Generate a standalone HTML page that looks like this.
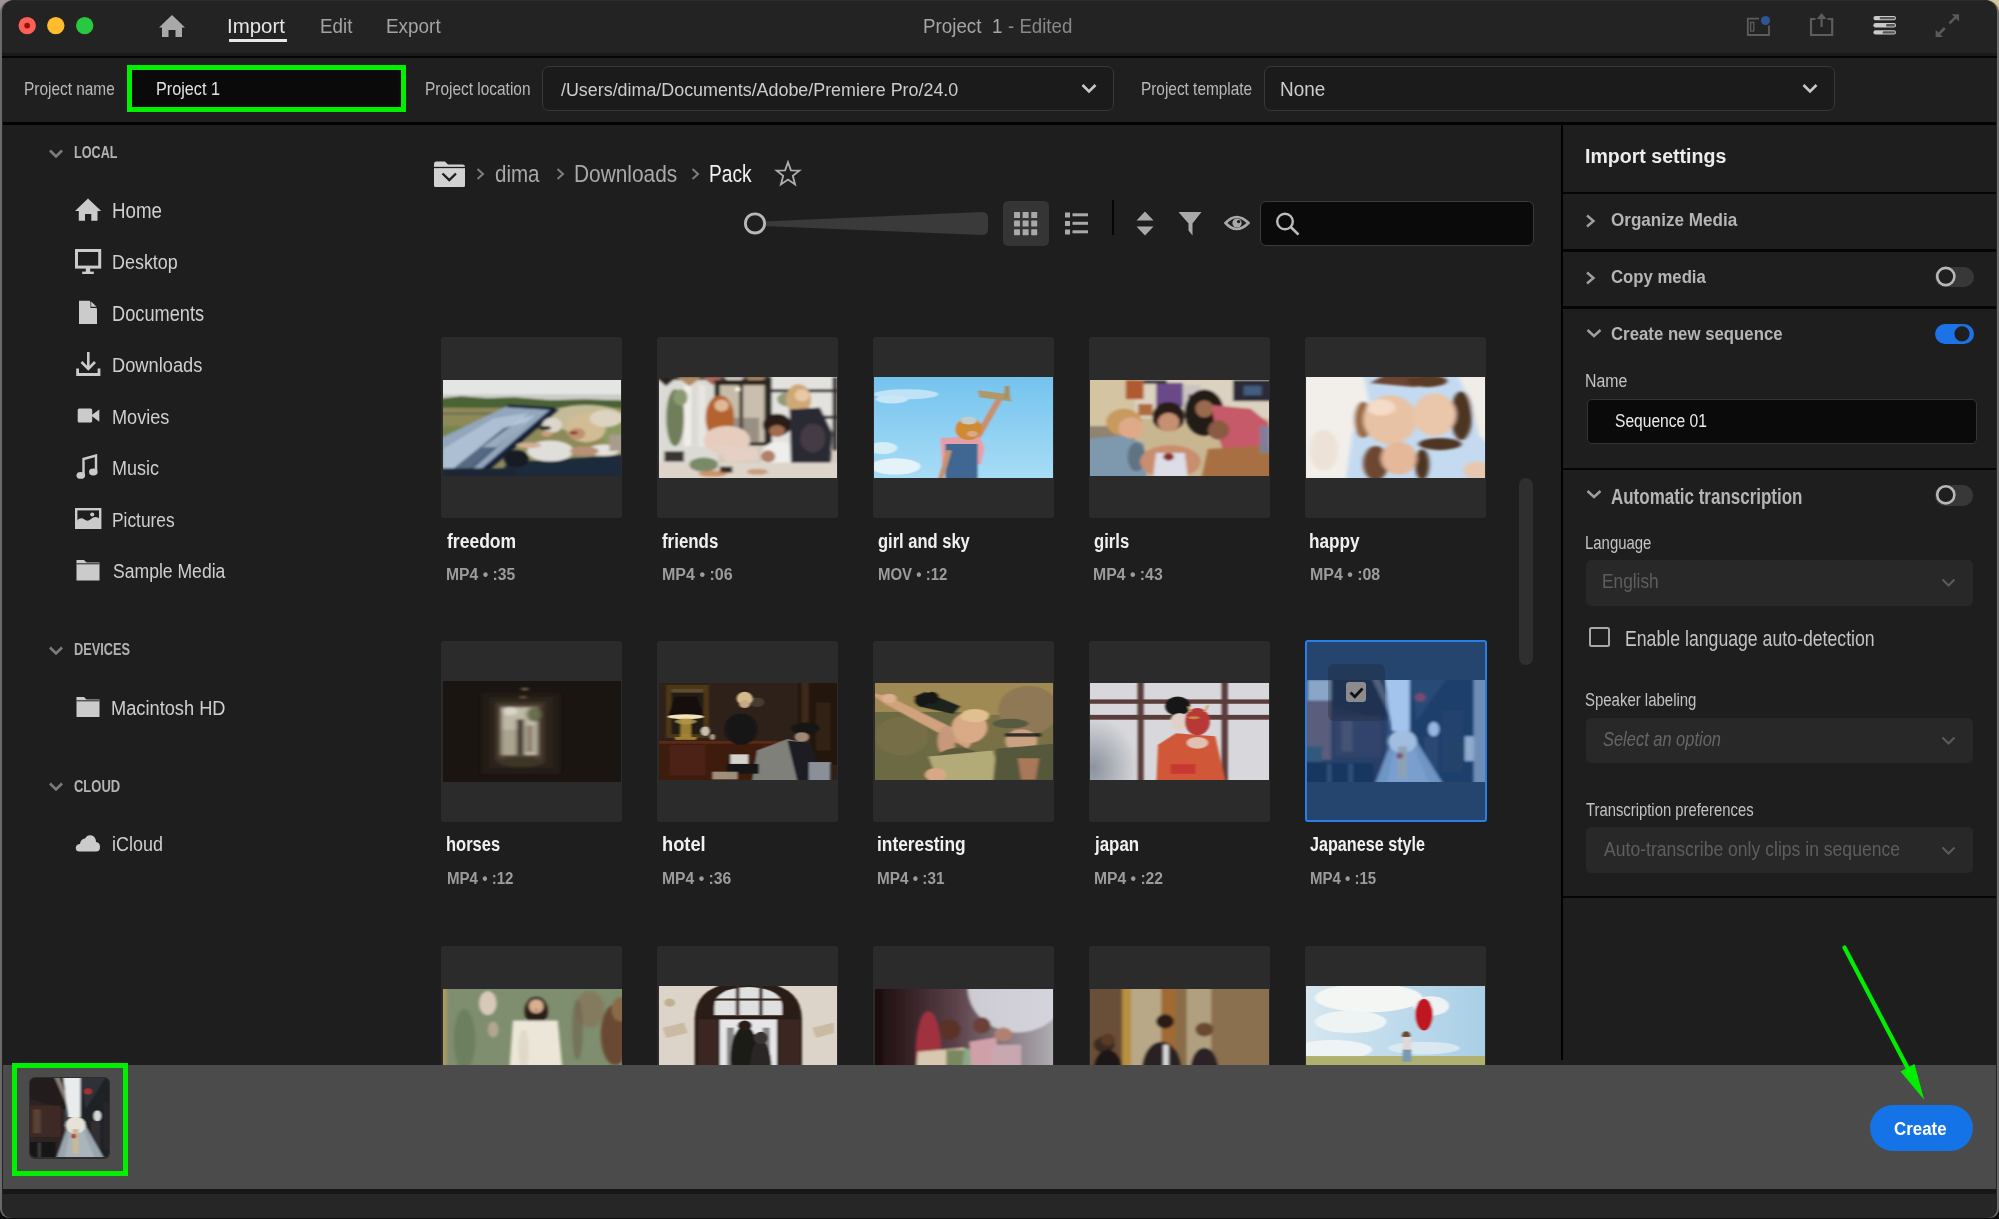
<!DOCTYPE html><html><head><meta charset="utf-8"><style>
html,body{margin:0;padding:0;width:1999px;height:1219px;overflow:hidden;background:#1e1e1e}
body{position:relative;font-family:"Liberation Sans",sans-serif}
body *{box-sizing:border-box}
body>div,body>svg{position:absolute}
.t{white-space:pre;transform-origin:0 0}
</style></head><body>
<div style="left:0px;top:0px;width:20px;height:20px;background:#9e9494;"></div>
<div style="left:1979px;top:0px;width:20px;height:20px;background:#d2c79c;"></div>
<div style="left:0px;top:1199px;width:20px;height:20px;background:#0c0c0c;"></div>
<div style="left:1979px;top:1199px;width:20px;height:20px;background:#0c0c0c;"></div>
<div style="left:0px;top:0px;width:1999px;height:1218px;background:#6a6a6a;border-radius:13px 13px 9px 9px"></div>
<div style="left:2px;top:0px;width:1995px;height:1217px;background:#232323;border-radius:12px 12px 8px 8px"></div>
<div style="left:14px;top:0px;width:1971px;height:1px;background:#2a2a2a;"></div>
<div style="left:0px;top:1218px;width:1999px;height:1px;background:#0c0c0c;"></div>
<div style="left:2px;top:53px;width:1995px;height:3px;background:#1a1a1a;"></div>
<div style="left:2px;top:56px;width:1995px;height:2px;background:#050505;"></div>
<div style="left:3px;top:58px;width:1993px;height:64px;background:#1f1f1f;"></div>
<div style="left:3px;top:122px;width:1993px;height:3px;background:#030303;"></div>
<div style="left:3px;top:125px;width:1993px;height:940px;background:#1e1e1e;"></div>
<div style="left:1561px;top:125px;width:2px;height:935px;background:#000;"></div>
<div style="left:1563px;top:125px;width:433px;height:935px;background:#1e1e1e;"></div>
<svg style="left:0;top:0" width="120" height="50"><circle cx="27.2" cy="25.6" r="8.7" fill="#fe5f57"/><circle cx="27.2" cy="25.6" r="2.9" fill="#991100"/><circle cx="55.8" cy="25.6" r="8.7" fill="#febc2e"/><circle cx="84.7" cy="25.6" r="8.7" fill="#28c840"/></svg>
<svg style="left:159px;top:15px;" width="26" height="22" viewBox="0 0 26 22"><path d="M13 0 L26 12.5 L23 12.5 L23 22 L16.5 22 L16.5 15 L9.5 15 L9.5 22 L3 22 L3 12.5 L0 12.5 Z" fill="#a9a9a9"/></svg>
<div class="t" style="left:227.46px;top:16.30px;font-size:20.43px;line-height:20px;font-weight:400;font-style:normal;color:#e6e6e6;transform:scaleX(0.9997)">Import</div>
<div style="left:229px;top:39px;width:58px;height:3px;background:#e8e8e8;"></div>
<div class="t" style="left:320.20px;top:17.30px;font-size:19.32px;line-height:19px;font-weight:400;font-style:normal;color:#a3a3a3;transform:scaleX(0.9723)">Edit</div>
<div class="t" style="left:386.29px;top:16.30px;font-size:20.43px;line-height:20px;font-weight:400;font-style:normal;color:#a3a3a3;transform:scaleX(0.9257)">Export</div>
<div class="t" style="left:922.90px;top:16.30px;font-size:20.14px;line-height:20px;font-weight:400;font-style:normal;color:#a6a6a6;transform:scaleX(0.9331)">Project  1</div>
<div class="t" style="left:1008.25px;top:16.30px;font-size:20.14px;line-height:20px;font-weight:400;font-style:normal;color:#898989;transform:scaleX(0.9265)">- Edited</div>
<svg style="left:1740px;top:5px;" width="230" height="40" viewBox="0 0 230 40"><path d="M7.8 13.6 H19 M7.8 12.8 V30 H29 V20.5" stroke="#5c5c5c" stroke-width="1.8" fill="none"/><rect x="10.6" y="17.4" width="3.2" height="8.6" fill="none" stroke="#5c5c5c" stroke-width="1.3"/><circle cx="25.5" cy="15.5" r="4.6" fill="#2c5591"/><path d="M75.5 14 H71 V30 H92.2 V14 H87.5" stroke="#5c5c5c" stroke-width="2.2" fill="none"/><path d="M81.6 22 V10" stroke="#5c5c5c" stroke-width="2.2"/><path d="M76.7 14 L81.6 8 L86.5 14 Z" fill="#5c5c5c"/><rect x="133.4" y="10.9" width="22.6" height="4.4" rx="2.2" fill="#c9c9c9"/><rect x="139.6" y="11.9" width="15.4" height="2.4" rx="1.2" fill="#555"/><rect x="133.4" y="18.1" width="22.6" height="4.4" rx="2.2" fill="#c9c9c9"/><rect x="146" y="19.1" width="9" height="2.4" rx="1.2" fill="#555"/><rect x="133.4" y="25.3" width="22.6" height="4.2" rx="2.1" fill="#c9c9c9"/><rect x="142.6" y="26.2" width="12.4" height="2.4" rx="1.2" fill="#555"/><path d="M209.4 18.4 L216.5 11.3" stroke="#5a5a5a" stroke-width="2.5"/><path d="M211.7 9.2 H219 V16.5 Z" fill="#5a5a5a"/><path d="M204.8 23 L198.5 29.3" stroke="#5a5a5a" stroke-width="2.5"/><path d="M195.6 24.7 V32 H202.9 Z" fill="#5a5a5a"/></svg>
<div class="t" style="left:24.27px;top:80.20px;font-size:17.67px;line-height:18px;font-weight:400;font-style:normal;color:#b8b8b8;transform:scaleX(0.8720)">Project name</div>
<div style="left:127px;top:65px;width:279px;height:47px;background:#00f000;"></div>
<div style="left:132px;top:70px;width:269px;height:37px;background:#0a0a0a;"></div>
<div class="t" style="left:156.30px;top:79.70px;font-size:18.36px;line-height:18px;font-weight:400;font-style:normal;color:#e2e2e2;transform:scaleX(0.8827)">Project 1</div>
<div class="t" style="left:424.56px;top:80.30px;font-size:17.53px;line-height:18px;font-weight:400;font-style:normal;color:#b8b8b8;transform:scaleX(0.8809)">Project location</div>
<div style="left:542px;top:66px;width:572px;height:45px;background:#1b1b1b;border:1.5px solid #383838;border-radius:7px"></div>
<div class="t" style="left:560.80px;top:80.00px;font-size:18.90px;line-height:19px;font-weight:400;font-style:normal;color:#cdcdcd;transform:scaleX(0.9459)">/Users/dima/Documents/Adobe/Premiere Pro/24.0</div>
<svg style="left:1080px;top:81px;" width="18" height="14" viewBox="0 0 18 14"><path d="M2.5 4 L9 10.5 L15.5 4" stroke="#c8c8c8" stroke-width="2.6" fill="none"/></svg>
<div class="t" style="left:1140.77px;top:80.30px;font-size:17.53px;line-height:18px;font-weight:400;font-style:normal;color:#b8b8b8;transform:scaleX(0.8776)">Project template</div>
<div style="left:1264px;top:66px;width:571px;height:45px;background:#1b1b1b;border:1.5px solid #383838;border-radius:7px"></div>
<div class="t" style="left:1280.49px;top:79.00px;font-size:20.00px;line-height:20px;font-weight:400;font-style:normal;color:#cdcdcd;transform:scaleX(0.9453)">None</div>
<svg style="left:1801px;top:81px;" width="18" height="14" viewBox="0 0 18 14"><path d="M2.5 4 L9 10.5 L15.5 4" stroke="#c8c8c8" stroke-width="2.6" fill="none"/></svg>
<svg style="left:48px;top:147.5px;" width="16" height="12" viewBox="0 0 16 12"><path d="M2 2.5 L8 8.5 L14 2.5" stroke="#7c7c7c" stroke-width="2.6" fill="none"/></svg>
<div class="t" style="left:73.74px;top:144.70px;font-size:15.71px;line-height:16px;font-weight:700;font-style:normal;color:#b3b3b3;transform:scaleX(0.8042)">LOCAL</div>
<div class="t" style="left:111.70px;top:199.50px;font-size:21.16px;line-height:21px;font-weight:400;font-style:normal;color:#cfcfcf;transform:scaleX(0.8854)">Home</div>
<div class="t" style="left:111.77px;top:252.30px;font-size:20.00px;line-height:20px;font-weight:400;font-style:normal;color:#cfcfcf;transform:scaleX(0.8966)">Desktop</div>
<div class="t" style="left:111.74px;top:302.60px;font-size:21.16px;line-height:21px;font-weight:400;font-style:normal;color:#cfcfcf;transform:scaleX(0.8606)">Documents</div>
<div class="t" style="left:111.74px;top:355.30px;font-size:20.00px;line-height:20px;font-weight:400;font-style:normal;color:#cfcfcf;transform:scaleX(0.9127)">Downloads</div>
<div class="t" style="left:111.75px;top:407.20px;font-size:20.00px;line-height:20px;font-weight:400;font-style:normal;color:#cfcfcf;transform:scaleX(0.9060)">Movies</div>
<div class="t" style="left:111.76px;top:458.40px;font-size:20.00px;line-height:20px;font-weight:400;font-style:normal;color:#cfcfcf;transform:scaleX(0.8999)">Music</div>
<div class="t" style="left:111.81px;top:509.60px;font-size:20.00px;line-height:20px;font-weight:400;font-style:normal;color:#cfcfcf;transform:scaleX(0.8680)">Pictures</div>
<div class="t" style="left:112.50px;top:560.60px;font-size:20.00px;line-height:20px;font-weight:400;font-style:normal;color:#cfcfcf;transform:scaleX(0.8787)">Sample Media</div>
<svg style="left:75px;top:198px;" width="27" height="23" viewBox="0 0 27 23"><path d="M13 0.5 L26.2 13 L22.5 13 L22.5 22.8 L16.3 22.8 L16.3 16 L10 16 L10 22.8 L3.8 22.8 L3.8 13 L0 13 Z" fill="#cbcbcb"/></svg>
<svg style="left:75px;top:249px;" width="27" height="25" viewBox="0 0 27 25"><rect x="1.5" y="1.5" width="23.2" height="16.6" fill="none" stroke="#cbcbcb" stroke-width="3"/><rect x="10.8" y="19" width="4.4" height="4" fill="#cbcbcb"/><rect x="7.2" y="22.6" width="11.6" height="2.4" fill="#cbcbcb"/></svg>
<svg style="left:79px;top:300px;" width="18" height="24" viewBox="0 0 18 24"><path d="M0 0.8 H10.5 L18 8.5 V24 H0 Z" fill="#cbcbcb"/><path d="M11.5 0.8 V8 H18" fill="#1e1e1e"/><path d="M12.2 1.5 L17.5 6.8 H12.2 Z" fill="#cbcbcb"/></svg>
<svg style="left:76px;top:351px;" width="25" height="26" viewBox="0 0 25 26"><path d="M12.3 1 V17" stroke="#cbcbcb" stroke-width="2.6"/><path d="M5.5 11 L12.3 18 L19 11" stroke="#cbcbcb" stroke-width="2.6" fill="none"/><path d="M1.6 17.5 V23.5 H23 V17.5" stroke="#cbcbcb" stroke-width="2.8" fill="none"/></svg>
<svg style="left:77px;top:408px;" width="24" height="15" viewBox="0 0 24 15"><rect x="0.7" y="0.5" width="14.5" height="14" rx="1.5" fill="#cbcbcb"/><path d="M14 7.5 L22.3 1.5 V13.8 Z" fill="#cbcbcb"/></svg>
<svg style="left:76px;top:454px;" width="22" height="26" viewBox="0 0 22 26"><path d="M7.5 21 V5 L20 1.5 V17" stroke="#cbcbcb" stroke-width="2.4" fill="none"/><ellipse cx="4.8" cy="21.4" rx="4.3" ry="3.4" fill="#cbcbcb"/><ellipse cx="17.3" cy="18" rx="4.3" ry="3.4" fill="#cbcbcb"/></svg>
<svg style="left:75px;top:508px;" width="27" height="21" viewBox="0 0 27 21"><rect x="1.2" y="1.2" width="24" height="18.6" fill="none" stroke="#cbcbcb" stroke-width="2.4"/><path d="M1.2 13.5 Q5 8 9.5 11.5 Q12.5 14 16 11 Q20 7 25.2 11 V20 H1.2 Z" fill="#cbcbcb"/><circle cx="17.2" cy="6.5" r="2" fill="#cbcbcb"/></svg>
<svg style="left:76px;top:559px;" width="24" height="22" viewBox="0 0 24 22"><path d="M0.5 1 H8 L10.5 3.5 H23.5 V21.5 H0.5 Z" fill="#cbcbcb"/><path d="M0.5 4.8 H23.5" stroke="#1e1e1e" stroke-width="1"/></svg>
<svg style="left:48px;top:644.5px;" width="16" height="12" viewBox="0 0 16 12"><path d="M2 2.5 L8 8.5 L14 2.5" stroke="#7c7c7c" stroke-width="2.6" fill="none"/></svg>
<div class="t" style="left:73.93px;top:642.40px;font-size:16.00px;line-height:16px;font-weight:700;font-style:normal;color:#b3b3b3;transform:scaleX(0.7978)">DEVICES</div>
<svg style="left:76px;top:696px;" width="24" height="22" viewBox="0 0 24 22"><path d="M0.5 1 H8 L10.5 3.5 H23.5 V21 H0.5 Z" fill="#cbcbcb"/><path d="M0.5 4.8 H23.5" stroke="#1e1e1e" stroke-width="1"/></svg>
<div class="t" style="left:111.24px;top:697.80px;font-size:20.00px;line-height:20px;font-weight:400;font-style:normal;color:#cfcfcf;transform:scaleX(0.9119)">Macintosh HD</div>
<svg style="left:48px;top:780.5px;" width="16" height="12" viewBox="0 0 16 12"><path d="M2 2.5 L8 8.5 L14 2.5" stroke="#7c7c7c" stroke-width="2.6" fill="none"/></svg>
<div class="t" style="left:74.18px;top:778.50px;font-size:16.00px;line-height:16px;font-weight:700;font-style:normal;color:#b3b3b3;transform:scaleX(0.8111)">CLOUD</div>
<svg style="left:75px;top:833px;" width="26" height="19" viewBox="0 0 26 19"><path d="M4.5 18.5 Q0.5 18.5 0.8 14.5 Q1.2 11 5 11 Q5.5 6 10 5.5 Q12.5 1 17 2.5 Q21 4 21 9 Q25 9.5 25 14 Q25 18.5 21 18.5 Z" fill="#cbcbcb"/></svg>
<div class="t" style="left:111.62px;top:834.40px;font-size:20.00px;line-height:20px;font-weight:400;font-style:normal;color:#cfcfcf;transform:scaleX(0.8975)">iCloud</div>
<svg style="left:433px;top:160px;" width="33" height="28" viewBox="0 0 33 28"><path d="M1 4 Q1 1.5 3 1.5 H12 L15 4.5 H30 Q32 4.5 32 7 V25.5 Q32 27 30.5 27 H2.5 Q1 27 1 25.5 Z" fill="#d2d2d2"/><path d="M1 7.5 H32" stroke="#1e1e1e" stroke-width="1.3"/><path d="M9.5 13.5 L16.3 20 L23 13.5" stroke="#1e1e1e" stroke-width="2.4" fill="none"/></svg>
<svg style="left:476px;top:167.5px;" width="9" height="12" viewBox="0 0 9 12"><path d="M1.5 1 L7 6 L1.5 11" stroke="#7e7e7e" stroke-width="2" fill="none"/></svg>
<div class="t" style="left:495.18px;top:161.70px;font-size:23.84px;line-height:24px;font-weight:400;font-style:normal;color:#a9a9a9;transform:scaleX(0.8622)">dima</div>
<svg style="left:555.5px;top:167.5px;" width="9" height="12" viewBox="0 0 9 12"><path d="M1.5 1 L7 6 L1.5 11" stroke="#7e7e7e" stroke-width="2" fill="none"/></svg>
<div class="t" style="left:573.53px;top:161.70px;font-size:23.84px;line-height:24px;font-weight:400;font-style:normal;color:#a9a9a9;transform:scaleX(0.8760)">Downloads</div>
<svg style="left:690.5px;top:167.5px;" width="9" height="12" viewBox="0 0 9 12"><path d="M1.5 1 L7 6 L1.5 11" stroke="#7e7e7e" stroke-width="2" fill="none"/></svg>
<div class="t" style="left:709.47px;top:162.20px;font-size:23.56px;line-height:24px;font-weight:400;font-style:normal;color:#f2f2f2;transform:scaleX(0.8121)">Pack</div>
<svg style="left:774px;top:160px;" width="28" height="27" viewBox="0 0 28 27"><path d="M14 2.2 L16.9 10.4 L25.4 10.6 L18.8 15.9 L21.1 24.4 L14 19.6 L6.9 24.4 L9.2 15.9 L2.6 10.6 L11.1 10.4 Z" fill="none" stroke="#b0b0b0" stroke-width="1.8" stroke-linejoin="miter"/></svg>
<svg style="left:742px;top:210px;" width="250" height="28" viewBox="0 0 250 28"><path d="M21 11.5 L240 2 Q246 2 246 8 V19 Q246 25 240 25 L21 16 Z" fill="#3a3a3a"/><circle cx="13" cy="13.4" r="9.6" fill="#1e1e1e" stroke="#b8b8b8" stroke-width="2.8"/></svg>
<div style="left:1003px;top:201px;width:46px;height:45px;background:#353535;border-radius:5px"></div>
<svg style="left:1013px;top:211px;" width="26" height="26" viewBox="0 0 26 26"><rect x="1.0" y="1.0" width="6" height="6" rx="0.6" fill="#a9a9a9"/><rect x="1.0" y="9.6" width="6" height="6" rx="0.6" fill="#a9a9a9"/><rect x="1.0" y="18.2" width="6" height="6" rx="0.6" fill="#a9a9a9"/><rect x="9.6" y="1.0" width="6" height="6" rx="0.6" fill="#a9a9a9"/><rect x="9.6" y="9.6" width="6" height="6" rx="0.6" fill="#a9a9a9"/><rect x="9.6" y="18.2" width="6" height="6" rx="0.6" fill="#a9a9a9"/><rect x="18.2" y="1.0" width="6" height="6" rx="0.6" fill="#a9a9a9"/><rect x="18.2" y="9.6" width="6" height="6" rx="0.6" fill="#a9a9a9"/><rect x="18.2" y="18.2" width="6" height="6" rx="0.6" fill="#a9a9a9"/></svg>
<svg style="left:1064px;top:211px;" width="25" height="26" viewBox="0 0 25 26"><rect x="1" y="1.5" width="5" height="5" fill="#a9a9a9"/><rect x="1" y="10" width="5" height="5" fill="#a9a9a9"/><rect x="1" y="18.5" width="5" height="5" fill="#a9a9a9"/><rect x="8.5" y="2.3" width="15.5" height="3" fill="#a9a9a9"/><rect x="8.5" y="10.8" width="15.5" height="3" fill="#a9a9a9"/><rect x="8.5" y="19.3" width="15.5" height="3" fill="#a9a9a9"/></svg>
<div style="left:1112px;top:200px;width:2px;height:35px;background:#050505;"></div>
<svg style="left:1135px;top:211px;" width="20" height="25" viewBox="0 0 20 25"><path d="M10 0.5 L18.5 9.5 H1.5 Z M10 24.5 L18.5 15.5 H1.5 Z" fill="#a9a9a9"/></svg>
<svg style="left:1178px;top:211px;" width="24" height="25" viewBox="0 0 24 25"><path d="M0.5 1 H23.5 L14.5 12.5 V24.5 L10.5 19.5 V12.5 Z" fill="#a9a9a9"/></svg>
<svg style="left:1224px;top:213px;" width="26" height="20" viewBox="0 0 26 20"><path d="M1.5 10 Q12.5 -2 24.5 10 Q12.5 22 1.5 10 Z" fill="none" stroke="#a9a9a9" stroke-width="2.6"/><circle cx="13" cy="10" r="4.6" fill="#a9a9a9"/><circle cx="14.6" cy="8.6" r="1.7" fill="#1e1e1e"/></svg>
<div style="left:1260px;top:201px;width:274px;height:45px;background:#0a0a0a;border:1.5px solid #3b3b3b;border-radius:6px"></div>
<svg style="left:1275px;top:211px;" width="27" height="27" viewBox="0 0 27 27"><circle cx="10" cy="10.5" r="7.8" fill="none" stroke="#bdbdbd" stroke-width="2.4"/><path d="M15.8 16 L23.5 23.7" stroke="#bdbdbd" stroke-width="2.6"/></svg>
<div style="left:1519px;top:478px;width:14px;height:187px;background:#2f2f2f;border-radius:7px"></div>
<div class="t" style="left:1585.33px;top:145.20px;font-size:20.82px;line-height:21px;font-weight:700;font-style:normal;color:#ececec;transform:scaleX(0.9401)">Import settings</div>
<div style="left:1563px;top:191.5px;width:433px;height:2.5px;background:#050505;"></div>
<svg style="left:1585px;top:214px;" width="11" height="14" viewBox="0 0 11 14"><path d="M2 1.5 L8.5 7 L2 12.5" stroke="#a0a0a0" stroke-width="2.4" fill="none"/></svg>
<div class="t" style="left:1611.32px;top:211.30px;font-size:18.36px;line-height:18px;font-weight:700;font-style:normal;color:#b5b5b5;transform:scaleX(0.9298)">Organize Media</div>
<div style="left:1563px;top:249px;width:433px;height:2.5px;background:#050505;"></div>
<svg style="left:1585px;top:271px;" width="11" height="14" viewBox="0 0 11 14"><path d="M2 1.5 L8.5 7 L2 12.5" stroke="#a0a0a0" stroke-width="2.4" fill="none"/></svg>
<div class="t" style="left:1611.33px;top:268.20px;font-size:18.08px;line-height:18px;font-weight:700;font-style:normal;color:#b5b5b5;transform:scaleX(0.9253)">Copy media</div>
<div style="left:1935px;top:266.5px;width:38.5px;height:20px;background:#383838;border-radius:10px"></div>
<svg style="left:1935px;top:266px;" width="22" height="22" viewBox="0 0 22 22"><circle cx="10.8" cy="10.5" r="8.6" fill="#1f1f1f" stroke="#b8b8b8" stroke-width="2.6"/></svg>
<div style="left:1563px;top:306px;width:433px;height:2.5px;background:#050505;"></div>
<svg style="left:1586px;top:328px;" width="16" height="11" viewBox="0 0 16 11"><path d="M1.5 2 L8 8 L14.5 2" stroke="#a0a0a0" stroke-width="2.4" fill="none"/></svg>
<div class="t" style="left:1611.33px;top:324.40px;font-size:19.14px;line-height:19px;font-weight:700;font-style:normal;color:#b5b5b5;transform:scaleX(0.8771)">Create new sequence</div>
<div style="left:1935px;top:323.5px;width:38.5px;height:20.5px;background:#1e72e8;border-radius:10.5px"></div>
<svg style="left:1951px;top:323px;" width="22" height="22" viewBox="0 0 22 22"><circle cx="11" cy="10.8" r="8.2" fill="#1f1f1f" stroke="#1e72e8" stroke-width="1.2"/></svg>
<div class="t" style="left:1585.23px;top:372.20px;font-size:17.68px;line-height:18px;font-weight:400;font-style:normal;color:#c3c3c3;transform:scaleX(0.8978)">Name</div>
<div style="left:1586.5px;top:399px;width:390px;height:45px;background:#0a0a0a;border:1.5px solid #343434;border-radius:5px"></div>
<div class="t" style="left:1615.18px;top:410.80px;font-size:18.73px;line-height:19px;font-weight:400;font-style:normal;color:#ececec;transform:scaleX(0.8328)">Sequence 01</div>
<div style="left:1563px;top:467.5px;width:433px;height:2.5px;background:#050505;"></div>
<svg style="left:1586px;top:489px;" width="16" height="11" viewBox="0 0 16 11"><path d="M1.5 2 L8 8 L14.5 2" stroke="#a0a0a0" stroke-width="2.4" fill="none"/></svg>
<div class="t" style="left:1611.36px;top:486.00px;font-size:21.23px;line-height:21px;font-weight:700;font-style:normal;color:#b5b5b5;transform:scaleX(0.7999)">Automatic transcription</div>
<div style="left:1935px;top:485px;width:38px;height:20.5px;background:#383838;border-radius:10px"></div>
<svg style="left:1935px;top:484px;" width="22" height="22" viewBox="0 0 22 22"><circle cx="10.8" cy="10.8" r="8.6" fill="#1f1f1f" stroke="#b8b8b8" stroke-width="2.6"/></svg>
<div class="t" style="left:1584.61px;top:533.00px;font-size:19.28px;line-height:19px;font-weight:400;font-style:normal;color:#c3c3c3;transform:scaleX(0.7747)">Language</div>
<div style="left:1585.8px;top:560px;width:387px;height:46px;background:#282828;border-radius:5px"></div>
<div class="t" style="left:1602.22px;top:570.00px;font-size:20.55px;line-height:21px;font-weight:400;font-style:normal;color:#5e5e5e;transform:scaleX(0.8406)">English</div>
<svg style="left:1941px;top:578px;" width="15" height="10" viewBox="0 0 15 10"><path d="M1.5 1.5 L7.5 7.5 L13.5 1.5" stroke="#5a5a5a" stroke-width="2.2" fill="none"/></svg>
<div style="left:1589px;top:626.5px;width:21px;height:20px;background:transparent;border:2.4px solid #a8a8a8;border-radius:2.5px"></div>
<div class="t" style="left:1625.08px;top:627.50px;font-size:21.23px;line-height:21px;font-weight:400;font-style:normal;color:#c3c3c3;transform:scaleX(0.8331)">Enable language auto-detection</div>
<div class="t" style="left:1585.20px;top:690.90px;font-size:18.22px;line-height:18px;font-weight:400;font-style:normal;color:#c3c3c3;transform:scaleX(0.8218)">Speaker labeling</div>
<div style="left:1585.8px;top:717.7px;width:387px;height:45.5px;background:#282828;border-radius:5px"></div>
<div class="t" style="left:1603.27px;top:728.00px;font-size:20.55px;line-height:21px;font-weight:400;font-style:italic;color:#666666;transform:scaleX(0.8002)">Select an option</div>
<svg style="left:1941px;top:736px;" width="15" height="10" viewBox="0 0 15 10"><path d="M1.5 1.5 L7.5 7.5 L13.5 1.5" stroke="#5a5a5a" stroke-width="2.2" fill="none"/></svg>
<div class="t" style="left:1585.50px;top:800.30px;font-size:18.63px;line-height:19px;font-weight:400;font-style:normal;color:#c3c3c3;transform:scaleX(0.7967)">Transcription preferences</div>
<div style="left:1585.8px;top:827.4px;width:387px;height:45.5px;background:#282828;border-radius:5px"></div>
<div class="t" style="left:1603.60px;top:837.50px;font-size:20.55px;line-height:21px;font-weight:400;font-style:normal;color:#5e5e5e;transform:scaleX(0.8554)">Auto-transcribe only clips in sequence</div>
<svg style="left:1941px;top:846px;" width="15" height="10" viewBox="0 0 15 10"><path d="M1.5 1.5 L7.5 7.5 L13.5 1.5" stroke="#5a5a5a" stroke-width="2.2" fill="none"/></svg>
<div style="left:1563px;top:895.5px;width:433px;height:2.5px;background:#050505;"></div>
<div style="left:441px;top:337px;width:181px;height:181px;background:#2b2b2b;border-radius:3px"></div>
<div style="left:657px;top:337px;width:181px;height:181px;background:#2b2b2b;border-radius:3px"></div>
<div style="left:873px;top:337px;width:181px;height:181px;background:#2b2b2b;border-radius:3px"></div>
<div style="left:1089px;top:337px;width:181px;height:181px;background:#2b2b2b;border-radius:3px"></div>
<div style="left:1305px;top:337px;width:181px;height:181px;background:#2b2b2b;border-radius:3px"></div>
<div style="left:441px;top:640.5px;width:181px;height:181px;background:#2b2b2b;border-radius:3px"></div>
<div style="left:657px;top:640.5px;width:181px;height:181px;background:#2b2b2b;border-radius:3px"></div>
<div style="left:873px;top:640.5px;width:181px;height:181px;background:#2b2b2b;border-radius:3px"></div>
<div style="left:1089px;top:640.5px;width:181px;height:181px;background:#2b2b2b;border-radius:3px"></div>
<div style="left:1304.5px;top:640.0px;width:182px;height:182px;background:#2b2b2b;border-radius:3px"></div>
<div style="left:441px;top:946px;width:181px;height:181px;background:#2b2b2b;border-radius:3px"></div>
<div style="left:657px;top:946px;width:181px;height:181px;background:#2b2b2b;border-radius:3px"></div>
<div style="left:873px;top:946px;width:181px;height:181px;background:#2b2b2b;border-radius:3px"></div>
<div style="left:1089px;top:946px;width:181px;height:181px;background:#2b2b2b;border-radius:3px"></div>
<div style="left:1305px;top:946px;width:181px;height:181px;background:#2b2b2b;border-radius:3px"></div>
<svg style="left:442.6px;top:379.6px;" width="178.9" height="96.0" viewBox="0 0 100 100" preserveAspectRatio="none"><defs><filter id="f1" x="-10%" y="-10%" width="120%" height="120%"><feGaussianBlur stdDeviation="1.0"/></filter></defs><rect x="-50" y="-50" width="300" height="300" fill="#8f8a5a"/><g filter="url(#f1)"><rect x="-5" y="-5" width="110" height="25" fill="#e4e6e4" opacity="1"/><rect x="-5" y="15" width="110" height="6" fill="#c8ccc4" opacity="1"/><polygon points="-5,20 10,17 25,19 40,18 60,21 80,20 105,22 105,30 -5,29" fill="#4c6236" opacity="1"/><rect x="-5" y="29" width="110" height="34" fill="#8e8a58" opacity="1"/><rect x="-5" y="34" width="110" height="2" fill="#6a6a50" opacity="1"/><rect x="-5" y="48" width="45" height="16" fill="#78844e" opacity="1"/><ellipse cx="80" cy="40" rx="22" ry="14" fill="#c4bc98" opacity="1"/><ellipse cx="96" cy="55" rx="9" ry="12" fill="#8a9a5e" opacity="1"/><polygon points="-5,100 -5,64 36,27 63,30 21,100" fill="#92a6bc" opacity="1"/><polygon points="0,96 0,72 28,40 48,34 12,96" fill="#b4c6d8" opacity="0.8"/><polygon points="6,92 34,50 46,44 16,94" fill="#3a4c68" opacity="0.75"/><polygon points="22,70 44,40 52,36 30,70" fill="#c8d8e6" opacity="0.6"/><line x1="63" y1="30" x2="20" y2="99" stroke="#142238" stroke-width="4.5"/><line x1="36" y1="27" x2="63" y2="30" stroke="#142238" stroke-width="3"/><polygon points="36,86 100,78 105,78 105,105 30,105" fill="#1e2a3a" opacity="1"/><rect x="-5" y="92" width="45" height="13" fill="#1c2634" opacity="1"/><ellipse cx="41" cy="82" rx="7" ry="9" fill="#151a22" opacity="1"/><ellipse cx="60" cy="74" rx="13" ry="11" fill="#e0deda" opacity="1"/><ellipse cx="48" cy="68" rx="7" ry="3" fill="#d0b098" opacity="1"/><ellipse cx="61" cy="47" rx="5.5" ry="8" fill="#dcd6cc" opacity="1"/><ellipse cx="57" cy="50" rx="3.5" ry="2.2" fill="#1e1e1e" opacity="1"/><ellipse cx="58" cy="56" rx="3" ry="3" fill="#c8a080" opacity="1"/><ellipse cx="80" cy="50" rx="11" ry="15" fill="#d2bc94" opacity="1"/><ellipse cx="91" cy="40" rx="9" ry="9" fill="#dcd4c0" opacity="1"/><ellipse cx="75" cy="56" rx="4.5" ry="6" fill="#c09070" opacity="1"/><ellipse cx="73" cy="55" rx="2.5" ry="1.6" fill="#8a2a2a" opacity="1"/><ellipse cx="90" cy="73" rx="9" ry="6" fill="#e4e2de" opacity="1"/><ellipse cx="79" cy="74" rx="8" ry="5" fill="#b89078" opacity="1"/><rect x="93" y="57" width="12" height="17" fill="#a89c8c" opacity="1"/></g></svg>
<svg style="left:658.6px;top:376.6px;" width="178.9" height="101.9" viewBox="0 0 100 100" preserveAspectRatio="none"><defs><filter id="f2" x="-10%" y="-10%" width="120%" height="120%"><feGaussianBlur stdDeviation="0.8"/></filter></defs><rect x="-50" y="-50" width="300" height="300" fill="#d2cabe"/><g filter="url(#f2)"><rect x="-5" y="-5" width="38" height="110" fill="#dcdad4" opacity="1"/><rect x="14" y="8" width="4" height="60" fill="#f0eeea" opacity="1"/><rect x="22" y="8" width="4" height="60" fill="#e8e6e2" opacity="1"/><ellipse cx="9" cy="40" rx="5" ry="28" fill="#6f7e5a" opacity="1"/><ellipse cx="12" cy="20" rx="4" ry="8" fill="#8a9a70" opacity="1"/><rect x="-5" y="-5" width="110" height="8" fill="#3e3630" opacity="1"/><polygon points="-2,0 4,9 10,0" fill="#2a2420" opacity="1"/><polygon points="10,0 17,9 24,0" fill="#b08a60" opacity="1"/><polygon points="24,0 30,8 36,0" fill="#a86a58" opacity="1"/><polygon points="36,0 42,8 48,0" fill="#d8d0c8" opacity="1"/><polygon points="48,0 54,8 60,0" fill="#b08a60" opacity="1"/><polygon points="62,0 68,7 74,0" fill="#a89060" opacity="1"/><rect x="31" y="3" width="31" height="64" fill="#2a2622" opacity="1"/><rect x="34" y="8" width="11" height="56" fill="#c8bca8" opacity="1"/><rect x="47" y="8" width="12" height="56" fill="#cabfae" opacity="1"/><rect x="36" y="40" width="20" height="25" fill="#6a6058" opacity="0.5"/><ellipse cx="44" cy="12" rx="1.5" ry="2" fill="#ffffe0" opacity="1"/><rect x="62" y="-5" width="43" height="77" fill="#e4e2de" opacity="1"/><rect x="60" y="0" width="3" height="72" fill="#2a2624" opacity="1"/><rect x="62" y="12" width="43" height="3" fill="#3a3634" opacity="1"/><rect x="84" y="38" width="21" height="3" fill="#3a3634" opacity="1"/><rect x="97" y="0" width="3" height="72" fill="#3a3634" opacity="1"/><ellipse cx="72" cy="22" rx="6" ry="7" fill="#7a8a60" opacity="0.8"/><ellipse cx="34" cy="40" rx="8" ry="22" fill="#b4642f" opacity="1"/><ellipse cx="35" cy="28" rx="4" ry="6" fill="#e0b898" opacity="1"/><ellipse cx="38" cy="62" rx="13" ry="14" fill="#e6cdbd" opacity="1"/><polygon points="30,66 55,70 56,82 38,84" fill="#e4d0c4" opacity="1"/><ellipse cx="66" cy="47" rx="8" ry="11" fill="#2a1e18" opacity="1"/><ellipse cx="66" cy="53" rx="4.5" ry="6" fill="#a06c50" opacity="1"/><ellipse cx="67" cy="78" rx="10" ry="15" fill="#eeeeec" opacity="1"/><ellipse cx="61" cy="78" rx="4" ry="6" fill="#b08068" opacity="1"/><ellipse cx="78" cy="22" rx="7" ry="15" fill="#cfa876" opacity="1"/><ellipse cx="80" cy="18" rx="4" ry="6" fill="#e8c8a8" opacity="1"/><polygon points="73,32 90,30 97,55 95,100 74,100" fill="#2c2a36" opacity="1"/><ellipse cx="86" cy="60" rx="7" ry="14" fill="#443a44" opacity="1"/><rect x="-5" y="84" width="110" height="21" fill="#ddd5ca" opacity="1"/><ellipse cx="25" cy="86" rx="8" ry="7" fill="#7a8a68" opacity="1"/><rect x="3" y="73" width="11" height="10" fill="#3a3530" opacity="1"/><rect x="34" y="88" width="7" height="6" fill="#3a2a24" opacity="1"/><ellipse cx="55" cy="93" rx="6" ry="3" fill="#c8a080" opacity="1"/><ellipse cx="30" cy="95" rx="8" ry="3" fill="#c87840" opacity="0.7"/></g></svg>
<svg style="left:874.3px;top:376.9px;" width="178.7" height="101.6" viewBox="0 0 100 100" preserveAspectRatio="none"><defs><filter id="f3" x="-10%" y="-10%" width="120%" height="120%"><feGaussianBlur stdDeviation="0.7"/></filter><linearGradient id="gsky" x1="0" y1="0" x2="0" y2="1"><stop offset="0" stop-color="#72c2ee"/><stop offset="1" stop-color="#aadef6"/></linearGradient></defs><rect x="-50" y="-50" width="300" height="300" fill="#8ed0f2"/><g filter="url(#f3)"><rect x="-5" y="-5" width="110" height="110" fill="url(#gsky)"/><ellipse cx="18" cy="17" rx="18" ry="5" fill="#bfe2f6" opacity="1"/><ellipse cx="10" cy="22" rx="9" ry="4" fill="#c8e6f6" opacity="1"/><ellipse cx="12" cy="88" rx="14" ry="8" fill="#e4f3fa" opacity="1"/><ellipse cx="5" cy="70" rx="8" ry="6" fill="#d4eef8" opacity="1"/><line x1="57" y1="62" x2="70" y2="22" stroke="#c8906e" stroke-width="4"/><polygon points="58,13 76,17 77,24 59,20" fill="#b0986a" opacity="1"/><rect x="73" y="9" width="3" height="12" fill="#a89064" opacity="1"/><ellipse cx="52" cy="52" rx="6.5" ry="9.5" fill="#d08a30" opacity="1"/><ellipse cx="52" cy="43" rx="4" ry="3.5" fill="#c4ccce" opacity="1"/><ellipse cx="53" cy="58" rx="3" ry="3" fill="#d0a080" opacity="1"/><polygon points="37,60 59,58 62,70 60,86 38,86" fill="#e4a0a8" opacity="1"/><polygon points="40,66 58,66 58,105 40,105" fill="#3f6692" opacity="1"/><ellipse cx="53" cy="51" rx="7.5" ry="11" fill="#d08a30" opacity="1"/><ellipse cx="53" cy="43" rx="4.5" ry="3.8" fill="#c4ccce" opacity="1"/><ellipse cx="55" cy="56" rx="3" ry="3" fill="#d8a888" opacity="1"/><line x1="42" y1="72" x2="37" y2="102" stroke="#c8906e" stroke-width="3"/></g></svg>
<svg style="left:1090.3px;top:379.6px;" width="178.7" height="96.0" viewBox="0 0 100 100" preserveAspectRatio="none"><defs><filter id="f4" x="-10%" y="-10%" width="120%" height="120%"><feGaussianBlur stdDeviation="0.9"/></filter></defs><rect x="-50" y="-50" width="300" height="300" fill="#c8b690"/><g filter="url(#f4)"><rect x="-5" y="-5" width="30" height="55" fill="#d4c4a2" opacity="1"/><rect x="25" y="-5" width="80" height="45" fill="#dcd2c0" opacity="1"/><rect x="-5" y="48" width="30" height="16" fill="#8e8470" opacity="1"/><rect x="20" y="0" width="10" height="20" fill="#b05a30" opacity="1"/><rect x="37" y="3" width="15" height="25" fill="#6a4a88" opacity="1"/><rect x="52" y="5" width="10" height="37" fill="#c8c4c0" opacity="1"/><rect x="55" y="15" width="5" height="20" fill="#3a3a3a" opacity="0.7"/><rect x="80" y="0" width="25" height="22" fill="#2a2a38" opacity="1"/><rect x="86" y="6" width="10" height="10" fill="#4a6a90" opacity="0.8"/><rect x="30" y="0" width="13" height="4" fill="#3a3a3a" opacity="1"/><rect x="27" y="25" width="8" height="12" fill="#b06a40" opacity="1"/><ellipse cx="19" cy="44" rx="10" ry="14" fill="#c89a5e" opacity="1"/><ellipse cx="23" cy="50" rx="7" ry="11" fill="#e0aa8a" opacity="1"/><polygon points="-5,62 18,58 30,66 32,105 -5,105" fill="#7e98ae" opacity="1"/><ellipse cx="26" cy="80" rx="5" ry="15" fill="#5a6a78" opacity="0.8"/><ellipse cx="44" cy="38" rx="9" ry="15" fill="#2a1e18" opacity="1"/><ellipse cx="44" cy="44" rx="6" ry="10" fill="#c89072" opacity="1"/><ellipse cx="45" cy="85" rx="17" ry="17" fill="#c88e6e" opacity="1"/><polygon points="37,76 53,76 55,105 35,105" fill="#dcdde6" opacity="1"/><ellipse cx="44" cy="80" rx="3" ry="4" fill="#8a2a2a" opacity="1"/><ellipse cx="64" cy="34" rx="11" ry="24" fill="#241a16" opacity="1"/><ellipse cx="64" cy="30" rx="5" ry="9" fill="#9a6a4e" opacity="1"/><polygon points="68,26 90,30 100,45 100,78 75,75 70,50" fill="#c65a68" opacity="1"/><ellipse cx="72" cy="52" rx="6" ry="10" fill="#8a5a42" opacity="1"/><polygon points="66,72 100,68 105,105 62,105" fill="#a87042" opacity="1"/><rect x="95" y="48" width="10" height="28" fill="#6a8ab0" opacity="0.7"/></g></svg>
<svg style="left:1306px;top:376.9px;" width="178.7" height="101.6" viewBox="0 0 100 100" preserveAspectRatio="none"><defs><filter id="f5" x="-10%" y="-10%" width="120%" height="120%"><feGaussianBlur stdDeviation="1.1"/></filter></defs><rect x="-50" y="-50" width="300" height="300" fill="#c4daf0"/><g filter="url(#f5)"><polygon points="-5,-5 32,-5 36,30 26,55 22,105 -5,105" fill="#f2efeb" opacity="1"/><ellipse cx="10" cy="72" rx="8" ry="20" fill="#e8d8cc" opacity="0.6"/><polygon points="84,-5 105,-5 105,70 97,58 92,25" fill="#f0ece8" opacity="1"/><ellipse cx="96" cy="92" rx="8" ry="9" fill="#e6c8b0" opacity="1"/><polygon points="36,6 44,-2 60,-3 62,10" fill="#6a4430" opacity="1"/><ellipse cx="32" cy="42" rx="5" ry="18" fill="#9a6a44" opacity="1"/><ellipse cx="47" cy="42" rx="15" ry="24" fill="#e8c2a4" opacity="1"/><ellipse cx="42" cy="30" rx="8" ry="8" fill="#f4dcc8" opacity="1"/><ellipse cx="87" cy="38" rx="6" ry="24" fill="#4e3424" opacity="1"/><ellipse cx="68" cy="4" rx="11" ry="6" fill="#5a3a28" opacity="1"/><ellipse cx="75" cy="66" rx="12" ry="6" fill="#4e3424" opacity="1"/><ellipse cx="72" cy="37" rx="12" ry="21" fill="#eac6aa" opacity="1"/><ellipse cx="39" cy="85" rx="7" ry="17" fill="#6e4630" opacity="1"/><ellipse cx="65" cy="86" rx="4" ry="15" fill="#4e3424" opacity="1"/><ellipse cx="52" cy="80" rx="10" ry="16" fill="#e4b898" opacity="1"/></g></svg>
<svg style="left:443.1px;top:680.9px;" width="177.9" height="101.3" viewBox="0 0 100 100" preserveAspectRatio="none"><defs><filter id="f6" x="-10%" y="-10%" width="120%" height="120%"><feGaussianBlur stdDeviation="1.2"/></filter></defs><rect x="-50" y="-50" width="300" height="300" fill="#1a1511"/><g filter="url(#f6)"><rect x="22" y="12" width="44" height="80" fill="#241c15" opacity="1"/><rect x="26" y="16" width="36" height="70" fill="#2c231a" opacity="1"/><rect x="29" y="20" width="29" height="60" fill="#3a2e22" opacity="1"/><rect x="31" y="23" width="24" height="54" fill="#54463a" opacity="1"/><ellipse cx="44" cy="80" rx="13" ry="5" fill="#3e3428" opacity="1"/><rect x="33" y="26" width="20" height="47" fill="#bdb8a4" opacity="1"/><rect x="33" y="48" width="9" height="25" fill="#aaa48e" opacity="1"/><ellipse cx="51" cy="33" rx="4" ry="7" fill="#6a7050" opacity="1"/><ellipse cx="38" cy="30" rx="4" ry="4" fill="#d8d4c8" opacity="1"/><rect x="41.5" y="38" width="4" height="35" fill="#3a3028" opacity="1"/><rect x="47" y="44" width="3.5" height="26" fill="#8a7a68" opacity="1"/><ellipse cx="46" cy="8" rx="2" ry="0.8" fill="#d0b080" opacity="1"/><ellipse cx="45" cy="16" rx="1.5" ry="0.8" fill="#a08060" opacity="1"/></g></svg>
<svg style="left:658.6px;top:683.3px;" width="178.4" height="96.4" viewBox="0 0 100 100" preserveAspectRatio="none"><defs><filter id="f7" x="-10%" y="-10%" width="120%" height="120%"><feGaussianBlur stdDeviation="0.7"/></filter></defs><rect x="-50" y="-50" width="300" height="300" fill="#2e2119"/><g filter="url(#f7)"><rect x="78" y="-5" width="27" height="90" fill="#22170f" opacity="1"/><rect x="80" y="0" width="4" height="80" fill="#4a3220" opacity="0.7"/><rect x="88" y="20" width="8" height="50" fill="#3a2818" opacity="0.6"/><rect x="4" y="2" width="24" height="55" fill="#4e3818" opacity="1"/><rect x="7" y="6" width="18" height="47" fill="#241a12" opacity="1"/><rect x="7" y="6" width="18" height="4" fill="#8a7040" opacity="0.6"/><polygon points="5,34 9,14 21,14 25,34" fill="#121010" opacity="1"/><ellipse cx="15" cy="35" rx="10" ry="2.5" fill="#f2e4b8" opacity="1"/><ellipse cx="15" cy="40" rx="6" ry="3" fill="#c8b070" opacity="0.7"/><rect x="12" y="37" width="6" height="20" fill="#b89640" opacity="0.8"/><rect x="9" y="56" width="12" height="3" fill="#a08030" opacity="1"/><ellipse cx="26" cy="50" rx="2.5" ry="5" fill="#c8c0b0" opacity="1"/><ellipse cx="30" cy="56" rx="1.5" ry="3" fill="#a89880" opacity="1"/><ellipse cx="55" cy="20" rx="4" ry="5" fill="#4a3a30" opacity="1"/><rect x="-5" y="60" width="80" height="45" fill="#3c1a10" opacity="1"/><rect x="6" y="64" width="20" height="32" fill="#4e2414" opacity="1"/><rect x="58" y="64" width="15" height="24" fill="#48200f" opacity="1"/><rect x="-5" y="60" width="80" height="3" fill="#5a2a18" opacity="1"/><ellipse cx="46" cy="48" rx="9" ry="16" fill="#121212" opacity="1"/><ellipse cx="48" cy="16" rx="4.5" ry="7" fill="#d4bc8a" opacity="1"/><ellipse cx="48" cy="22" rx="3" ry="4" fill="#c8a888" opacity="1"/><polygon points="55,70 72,58 82,62 84,105 52,105" fill="#80807a" opacity="1"/><polygon points="72,60 85,62 92,105 78,105" fill="#1e1e22" opacity="1"/><ellipse cx="82" cy="47" rx="8" ry="6" fill="#161616" opacity="1"/><ellipse cx="80" cy="56" rx="4" ry="5" fill="#a08878" opacity="1"/><rect x="84" y="82" width="12" height="23" fill="#8a9098" opacity="1"/><rect x="40" y="74" width="10" height="10" fill="#d4d4cc" opacity="1"/><rect x="38" y="84" width="18" height="10" fill="#141414" opacity="1"/><rect x="30" y="92" width="14" height="8" fill="#c8c0a8" opacity="0.7"/></g></svg>
<svg style="left:874.6px;top:683px;" width="178.4" height="96.6" viewBox="0 0 100 100" preserveAspectRatio="none"><defs><filter id="f8" x="-10%" y="-10%" width="120%" height="120%"><feGaussianBlur stdDeviation="0.8"/></filter></defs><rect x="-50" y="-50" width="300" height="300" fill="#7a7046"/><g filter="url(#f8)"><rect x="-5" y="-5" width="110" height="38" fill="#a08a52" opacity="1"/><rect x="-5" y="30" width="55" height="75" fill="#6c6a42" opacity="1"/><ellipse cx="15" cy="55" rx="15" ry="20" fill="#7a7048" opacity="0.7"/><polygon points="-3,10 8,14 56,58 52,68 6,22" fill="#d0a27e" opacity="1"/><ellipse cx="8" cy="16" rx="4" ry="5" fill="#dcb090" opacity="1"/><polygon points="22,14 28,9 48,24 44,32 24,24" fill="#1a201c" opacity="1"/><ellipse cx="26" cy="18" rx="4" ry="6" fill="#121612" opacity="1"/><ellipse cx="32" cy="15" rx="4" ry="6" fill="#121612" opacity="1"/><ellipse cx="53" cy="46" rx="10" ry="16" fill="#d8aa86" opacity="1"/><ellipse cx="56" cy="34" rx="8" ry="7" fill="#e0c090" opacity="1"/><ellipse cx="40" cy="60" rx="5" ry="16" fill="#c8987a" opacity="1"/><ellipse cx="47" cy="80" rx="13" ry="13" fill="#5c5a3a" opacity="1"/><polygon points="30,76 66,70 72,105 36,105" fill="#b2ab78" opacity="1"/><ellipse cx="86" cy="28" rx="17" ry="25" fill="#8e7854" opacity="1"/><ellipse cx="76" cy="42" rx="10" ry="5" fill="#565a40" opacity="1"/><ellipse cx="82" cy="60" rx="9" ry="12" fill="#caa282" opacity="1"/><rect x="73" y="52" width="20" height="3.5" fill="#1a1a1a" opacity="0.85"/><polygon points="68,68 105,62 105,105 66,105" fill="#57593a" opacity="1"/><polygon points="80,78 92,78 90,100 82,100" fill="#a87858" opacity="1"/><ellipse cx="34" cy="95" rx="6" ry="7" fill="#d8a884" opacity="1"/></g></svg>
<svg style="left:1090px;top:683px;" width="179.0" height="96.6" viewBox="0 0 100 100" preserveAspectRatio="none"><defs><filter id="f9" x="-10%" y="-10%" width="120%" height="120%"><feGaussianBlur stdDeviation="0.6"/></filter><radialGradient id="gjp" cx="0.2" cy="0.75" r="0.8"><stop offset="0" stop-color="#8a929c"/><stop offset="1" stop-color="#d8d8dc"/></radialGradient></defs><rect x="-50" y="-50" width="300" height="300" fill="#d8d8dc"/><g filter="url(#f9)"><rect x="-5" y="38" width="32" height="67" fill="url(#gjp)"/><rect x="26.5" y="-5" width="3.5" height="110" fill="#5a3c3a" opacity="1"/><rect x="73.5" y="-5" width="3.5" height="110" fill="#5a3c3a" opacity="1"/><rect x="-5" y="17" width="110" height="4.5" fill="#5a3c3a" opacity="1"/><rect x="-5" y="33" width="110" height="5" fill="#5a3c3a" opacity="1"/><ellipse cx="49" cy="24" rx="7" ry="10" fill="#151515" opacity="1"/><ellipse cx="50" cy="40" rx="5" ry="9" fill="#e0d0c8" opacity="1"/><ellipse cx="60" cy="40" rx="7" ry="14" fill="#b83838" opacity="1"/><ellipse cx="58" cy="36" rx="3" ry="1.5" fill="#d8c040" opacity="0.6"/><polygon points="38,64 48,52 70,55 76,105 37,105" fill="#d05838" opacity="1"/><ellipse cx="60" cy="62" rx="6" ry="6" fill="#e0c0b0" opacity="1"/><rect x="45" y="84" width="14" height="10" fill="#c83830" opacity="1"/><line x1="56" y1="30" x2="55" y2="24" stroke="#c8a060" stroke-width="1.2"/><line x1="64" y1="30" x2="66" y2="23" stroke="#c8a060" stroke-width="1.2"/></g></svg>
<svg style="left:1306px;top:680.1px;" width="178.6" height="102.4" viewBox="0 0 100 100" preserveAspectRatio="none"><defs><filter id="f10" x="-10%" y="-10%" width="120%" height="120%"><feGaussianBlur stdDeviation="0.9"/></filter></defs><rect x="-50" y="-50" width="300" height="300" fill="#3a3a40"/><g filter="url(#f10)"><rect x="-5" y="-5" width="50" height="110" fill="#2e2220" opacity="1"/><rect x="-5" y="18" width="19" height="60" fill="#7a5040" opacity="1"/><rect x="1" y="0" width="13" height="20" fill="#c4bcb4" opacity="1"/><rect x="-5" y="-5" width="4" height="110" fill="#a0a0a0" opacity="1"/><polygon points="14,-5 36,-5 48,30 46,40 14,25" fill="#241c1a" opacity="1"/><polygon points="36,-5 40,-5 50,34 47,35" fill="#8a8078" opacity="1"/><rect x="16" y="35" width="26" height="40" fill="#3e2c26" opacity="1"/><rect x="20" y="40" width="6" height="30" fill="#5a4034" opacity="1"/><rect x="-5" y="65" width="14" height="40" fill="#3a4a40" opacity="1"/><polygon points="44,-5 63,-5 60,50 48,50" fill="#e8ecec" opacity="1"/><rect x="58" y="-5" width="47" height="110" fill="#1c2026" opacity="1"/><polygon points="58,-5 80,-5 62,40" fill="#2e3238" opacity="1"/><rect x="76" y="30" width="12" height="60" fill="#2a2a2c" opacity="0.8"/><rect x="66" y="55" width="8" height="40" fill="#3a3634" opacity="0.7"/><ellipse cx="64" cy="17" rx="3" ry="4" fill="#a83232" opacity="1"/><ellipse cx="71.5" cy="48" rx="3" ry="7" fill="#d8d8d8" opacity="1"/><rect x="89" y="55" width="6" height="24" fill="#c8c4bc" opacity="1"/><rect x="94" y="-5" width="11" height="110" fill="#9a9a9a" opacity="1"/><rect x="80" y="60" width="8" height="30" fill="#2a2624" opacity="1"/><polygon points="38,105 49,55 60,55 78,105" fill="#98a4ae" opacity="1"/><polygon points="45,105 50,60 59,60 70,105" fill="#aab4bc" opacity="1"/><ellipse cx="54" cy="60" rx="8" ry="11" fill="#e6e2d8" opacity="1"/><rect x="51.5" y="65" width="5" height="31" fill="#c8b898" opacity="1"/><ellipse cx="52.5" cy="74" rx="2" ry="3" fill="#b04030" opacity="1"/><rect x="-5" y="80" width="43" height="25" fill="#181818" opacity="1"/><rect x="10" y="79" width="28" height="2" fill="#2a2a2a" opacity="1"/><rect x="12" y="82" width="2" height="20" fill="#6a6a6a" opacity="0.5"/><rect x="24" y="82" width="2" height="20" fill="#6a6a6a" opacity="0.5"/></g></svg>
<div style="left:1304.5px;top:640px;width:182px;height:182px;background:rgba(30,120,240,0.34);border:2px solid #2a7fe6;border-radius:3px"></div>
<div style="left:1328px;top:664px;width:57px;height:56.5px;background:rgba(30,30,35,0.28);border-radius:6px"></div>
<div style="left:1346px;top:682px;width:20.2px;height:20.2px;background:#8c8c8c;border-radius:3px"></div>
<svg style="left:1346px;top:682px;" width="21" height="21" viewBox="0 0 21 21"><path d="M4.5 10.5 L8.8 14.8 L16.5 6.5" stroke="#111" stroke-width="2.8" fill="none"/></svg>
<svg style="left:442.7px;top:988.7px;" width="179.3" height="101.3" viewBox="0 0 100 100" preserveAspectRatio="none"><defs><filter id="f11" x="-10%" y="-10%" width="120%" height="120%"><feGaussianBlur stdDeviation="0.8"/></filter></defs><rect x="-50" y="-50" width="300" height="300" fill="#7e8e6e"/><g filter="url(#f11)"><rect x="-5" y="-5" width="7" height="110" fill="#b09a60" opacity="1"/><ellipse cx="25" cy="14" rx="5" ry="12" fill="#d8c8b8" opacity="1"/><ellipse cx="28" cy="40" rx="3" ry="8" fill="#c8b0a0" opacity="0.7"/><ellipse cx="82" cy="20" rx="8" ry="18" fill="#8a6a50" opacity="0.5"/><ellipse cx="12" cy="50" rx="6" ry="30" fill="#5a7050" opacity="0.5"/><ellipse cx="75" cy="40" rx="3" ry="30" fill="#6a5a48" opacity="0.5"/><ellipse cx="52" cy="22" rx="6.5" ry="14" fill="#2a1a14" opacity="1"/><ellipse cx="52" cy="17" rx="4" ry="7" fill="#d8b090" opacity="1"/><ellipse cx="52" cy="21" rx="1" ry="0.8" fill="#c02020" opacity="1"/><polygon points="39,31 64,31 68,105 36,105" fill="#ece6d8" opacity="1"/><ellipse cx="45" cy="60" rx="3" ry="20" fill="#d8d0c0" opacity="0.6"/><ellipse cx="96" cy="45" rx="8" ry="30" fill="#6a4a30" opacity="1"/><ellipse cx="99" cy="20" rx="5" ry="12" fill="#8a6a48" opacity="1"/></g></svg>
<svg style="left:658.7px;top:985.8px;" width="178.6" height="104.2" viewBox="0 0 100 100" preserveAspectRatio="none"><defs><filter id="f12" x="-10%" y="-10%" width="120%" height="120%"><feGaussianBlur stdDeviation="0.7"/></filter></defs><rect x="-50" y="-50" width="300" height="300" fill="#dcd4c8"/><g filter="url(#f12)"><path d="M20,105 V32 Q20,-4 50,-4 Q80,-4 80,32 V105 Z" fill="#2a1a14"/><path d="M31,28 V20 Q31,2 50,1 Q69,2 69,20 V28 Z" fill="#dfe0e0"/><rect x="43" y="0" width="2" height="28" fill="#3a2a24" opacity="1"/><rect x="56" y="0" width="2" height="28" fill="#3a2a24" opacity="1"/><rect x="31" y="12" width="38" height="2" fill="#3a2a24" opacity="1"/><rect x="34" y="32" width="32" height="73" fill="#e6e6e8" opacity="1"/><rect x="22" y="32" width="11" height="73" fill="#3a2620" opacity="1"/><rect x="67" y="32" width="12" height="73" fill="#3a2620" opacity="1"/><rect x="38" y="40" width="4" height="50" fill="#2a2a2a" opacity="0.5"/><rect x="58" y="40" width="4" height="50" fill="#2a2a2a" opacity="0.5"/><ellipse cx="48" cy="70" rx="8" ry="32" fill="#1f1a18" opacity="1"/><ellipse cx="48" cy="38" rx="4" ry="5" fill="#2a1f18" opacity="1"/><ellipse cx="57" cy="78" rx="6" ry="26" fill="#2a2826" opacity="1"/><ellipse cx="57" cy="50" rx="4" ry="6" fill="#3a3230" opacity="1"/><ellipse cx="6" cy="16" rx="3" ry="4" fill="#c0b090" opacity="1"/><polygon points="2,40 14,35 16,45 4,50" fill="#c0a888" opacity="0.6"/><polygon points="86,40 98,35 98,45 88,50" fill="#c0a888" opacity="0.6"/></g></svg>
<svg style="left:874.7px;top:988.7px;" width="178.2" height="101.3" viewBox="0 0 100 100" preserveAspectRatio="none"><defs><filter id="f13" x="-10%" y="-10%" width="120%" height="120%"><feGaussianBlur stdDeviation="0.8"/></filter><linearGradient id="gfa" x1="0" y1="0" x2="1" y2="0"><stop offset="0" stop-color="#140606"/><stop offset="0.45" stop-color="#5a4048"/><stop offset="1" stop-color="#b6b6bc"/></linearGradient></defs><rect x="-50" y="-50" width="300" height="300" fill="#60585c"/><g filter="url(#f13)"><rect x="-5" y="-5" width="110" height="110" fill="url(#gfa)"/><ellipse cx="80" cy="-2" rx="28" ry="45" fill="#d8d8e0" opacity="0.9"/><ellipse cx="30" cy="62" rx="7" ry="40" fill="#a03040" opacity="1"/><ellipse cx="42" cy="40" rx="6" ry="10" fill="#5a3028" opacity="1"/><polygon points="24,62 50,58 52,105 22,105" fill="#d8c8b0" opacity="1"/><rect x="40" y="60" width="10" height="45" fill="#7a8860" opacity="1"/><polygon points="50,58 58,62 60,105 48,105" fill="#8aa888" opacity="1"/><ellipse cx="60" cy="36" rx="5" ry="8" fill="#6a4038" opacity="1"/><polygon points="53,52 68,48 72,105 55,105" fill="#d0a0a8" opacity="1"/><ellipse cx="72" cy="45" rx="5" ry="7" fill="#b08070" opacity="1"/><polygon points="66,55 82,55 82,105 66,105" fill="#c8a8b0" opacity="1"/></g></svg>
<svg style="left:1090.3px;top:988.7px;" width="178.7" height="101.3" viewBox="0 0 100 100" preserveAspectRatio="none"><defs><filter id="f14" x="-10%" y="-10%" width="120%" height="120%"><feGaussianBlur stdDeviation="0.8"/></filter></defs><rect x="-50" y="-50" width="300" height="300" fill="#8a6c48"/><g filter="url(#f14)"><rect x="-5" y="-5" width="25" height="110" fill="#6a5038" opacity="1"/><ellipse cx="8" cy="55" rx="6" ry="8" fill="#3a2a20" opacity="1"/><rect x="18" y="-5" width="5" height="110" fill="#b89040" opacity="1"/><rect x="23" y="-5" width="17" height="110" fill="#b8a888" opacity="1"/><rect x="40" y="-5" width="8" height="110" fill="#a06a30" opacity="1"/><rect x="54" y="-5" width="14" height="110" fill="#b0a080" opacity="1"/><rect x="68" y="-5" width="37" height="110" fill="#8a7050" opacity="1"/><ellipse cx="40" cy="80" rx="11" ry="28" fill="#2a2220" opacity="1"/><ellipse cx="42" cy="32" rx="5" ry="7" fill="#2a1f18" opacity="1"/><rect x="41" y="55" width="3" height="35" fill="#e0e0e0" opacity="1"/><ellipse cx="64" cy="82" rx="8" ry="24" fill="#2a2228" opacity="1"/><ellipse cx="64" cy="40" rx="5" ry="7" fill="#6a4a30" opacity="1"/><ellipse cx="10" cy="80" rx="8" ry="20" fill="#1a1414" opacity="1"/><ellipse cx="10" cy="50" rx="4" ry="6" fill="#5a3a28" opacity="1"/></g></svg>
<svg style="left:1306px;top:985.9px;" width="178.8" height="79.6" viewBox="0 0 100 100" preserveAspectRatio="none"><defs><filter id="f15" x="-10%" y="-10%" width="120%" height="120%"><feGaussianBlur stdDeviation="0.7"/></filter><linearGradient id="gbl" x1="0" y1="0" x2="1" y2="0"><stop offset="0" stop-color="#d8e8f0"/><stop offset="1" stop-color="#a6cee6"/></linearGradient></defs><rect x="-50" y="-50" width="300" height="300" fill="#c8e0ee"/><g filter="url(#f15)"><rect x="-5" y="-5" width="110" height="110" fill="url(#gbl)"/><ellipse cx="35" cy="15" rx="30" ry="18" fill="#f4f6f4" opacity="1"/><ellipse cx="25" cy="45" rx="20" ry="14" fill="#eef4f4" opacity="1"/><ellipse cx="15" cy="80" rx="22" ry="12" fill="#eef4f6" opacity="1"/><ellipse cx="70" cy="25" rx="10" ry="12" fill="#eef2f4" opacity="1"/><ellipse cx="66" cy="78" rx="20" ry="8" fill="#e8f0f4" opacity="0.7"/><rect x="-5" y="88" width="110" height="17" fill="#b0b070" opacity="1"/><ellipse cx="66" cy="36" rx="5" ry="20" fill="#c01820" opacity="1"/><ellipse cx="56" cy="62" rx="2.5" ry="5" fill="#6a4a30" opacity="1"/><rect x="54" y="64" width="5" height="18" fill="#e0d8d8" opacity="1"/><rect x="54" y="80" width="5" height="15" fill="#7a98b0" opacity="1"/></g></svg>
<div class="t" style="left:446.82px;top:531.20px;font-size:20.00px;line-height:20px;font-weight:700;font-style:normal;color:#f0f0f0;transform:scaleX(0.8759)">freedom</div>
<div class="t" style="left:446.06px;top:567.30px;font-size:15.57px;line-height:16px;font-weight:700;font-style:normal;color:#9c9c9c;transform:scaleX(1.0091)">MP4 • :35</div>
<div class="t" style="left:662.23px;top:531.20px;font-size:20.00px;line-height:20px;font-weight:700;font-style:normal;color:#f0f0f0;transform:scaleX(0.8440)">friends</div>
<div class="t" style="left:661.84px;top:567.30px;font-size:15.57px;line-height:16px;font-weight:700;font-style:normal;color:#9c9c9c;transform:scaleX(1.0294)">MP4 • :06</div>
<div class="t" style="left:877.94px;top:531.20px;font-size:20.00px;line-height:20px;font-weight:700;font-style:normal;color:#f0f0f0;transform:scaleX(0.8259)">girl and sky</div>
<div class="t" style="left:877.70px;top:567.30px;font-size:15.57px;line-height:16px;font-weight:700;font-style:normal;color:#9c9c9c;transform:scaleX(0.9620)">MOV • :12</div>
<div class="t" style="left:1093.73px;top:531.20px;font-size:20.00px;line-height:20px;font-weight:700;font-style:normal;color:#f0f0f0;transform:scaleX(0.8327)">girls</div>
<div class="t" style="left:1093.45px;top:567.30px;font-size:15.57px;line-height:16px;font-weight:700;font-style:normal;color:#9c9c9c;transform:scaleX(1.0159)">MP4 • :43</div>
<div class="t" style="left:1309.47px;top:531.20px;font-size:20.00px;line-height:20px;font-weight:700;font-style:normal;color:#f0f0f0;transform:scaleX(0.8603)">happy</div>
<div class="t" style="left:1309.54px;top:567.30px;font-size:15.57px;line-height:16px;font-weight:700;font-style:normal;color:#9c9c9c;transform:scaleX(1.0240)">MP4 • :08</div>
<div class="t" style="left:446.41px;top:834.30px;font-size:19.73px;line-height:20px;font-weight:700;font-style:normal;color:#f0f0f0;transform:scaleX(0.8361)">horses</div>
<div class="t" style="left:446.50px;top:871.10px;font-size:16.00px;line-height:16px;font-weight:700;font-style:normal;color:#9c9c9c;transform:scaleX(0.9423)">MP4 • :12</div>
<div class="t" style="left:662.20px;top:834.30px;font-size:19.73px;line-height:20px;font-weight:700;font-style:normal;color:#f0f0f0;transform:scaleX(0.9261)">hotel</div>
<div class="t" style="left:662.36px;top:871.10px;font-size:16.00px;line-height:16px;font-weight:700;font-style:normal;color:#9c9c9c;transform:scaleX(0.9815)">MP4 • :36</div>
<div class="t" style="left:877.16px;top:834.30px;font-size:19.73px;line-height:20px;font-weight:700;font-style:normal;color:#f0f0f0;transform:scaleX(0.8786)">interesting</div>
<div class="t" style="left:877.28px;top:871.10px;font-size:16.00px;line-height:16px;font-weight:700;font-style:normal;color:#9c9c9c;transform:scaleX(0.9561)">MP4 • :31</div>
<div class="t" style="left:1095.24px;top:834.30px;font-size:19.73px;line-height:20px;font-weight:700;font-style:normal;color:#f0f0f0;transform:scaleX(0.8558)">japan</div>
<div class="t" style="left:1093.96px;top:871.10px;font-size:16.00px;line-height:16px;font-weight:700;font-style:normal;color:#9c9c9c;transform:scaleX(0.9786)">MP4 • :22</div>
<div class="t" style="left:1310.34px;top:834.30px;font-size:19.73px;line-height:20px;font-weight:700;font-style:normal;color:#f0f0f0;transform:scaleX(0.8199)">Japanese style</div>
<div class="t" style="left:1309.60px;top:871.10px;font-size:16.00px;line-height:16px;font-weight:700;font-style:normal;color:#9c9c9c;transform:scaleX(0.9373)">MP4 • :15</div>
<div style="left:3px;top:1065px;width:1993px;height:124px;background:#4b4b4b;"></div>
<div style="left:3px;top:1189px;width:1993px;height:5px;background:#171717;"></div>
<div style="left:3px;top:1194px;width:1993px;height:24px;background:#262626;border-radius:0 0 8px 8px"></div>
<div style="left:12px;top:1063px;width:116px;height:113px;background:#00f000;"></div>
<div style="left:17px;top:1068px;width:106px;height:103px;background:#4b4b4b;"></div>
<div style="left:28.5px;top:1077px;width:81px;height:82px;background:#2e2e2e;border-radius:6px"></div>
<svg style="left:30px;top:1078.3px;border-radius:5px" width="78.6" height="78.7" viewBox="17.5 0 63 100" preserveAspectRatio="none"><defs><filter id="f16" x="-10%" y="-10%" width="120%" height="120%"><feGaussianBlur stdDeviation="0.7"/></filter></defs><rect x="-50" y="-50" width="300" height="300" fill="#3a3a40"/><g filter="url(#f16)"><rect x="-5" y="-5" width="50" height="110" fill="#2e2220" opacity="1"/><rect x="-5" y="18" width="19" height="60" fill="#7a5040" opacity="1"/><rect x="1" y="0" width="13" height="20" fill="#c4bcb4" opacity="1"/><rect x="-5" y="-5" width="4" height="110" fill="#a0a0a0" opacity="1"/><polygon points="14,-5 36,-5 48,30 46,40 14,25" fill="#241c1a" opacity="1"/><polygon points="36,-5 40,-5 50,34 47,35" fill="#8a8078" opacity="1"/><rect x="16" y="35" width="26" height="40" fill="#3e2c26" opacity="1"/><rect x="20" y="40" width="6" height="30" fill="#5a4034" opacity="1"/><rect x="-5" y="65" width="14" height="40" fill="#3a4a40" opacity="1"/><polygon points="44,-5 63,-5 60,50 48,50" fill="#e8ecec" opacity="1"/><rect x="58" y="-5" width="47" height="110" fill="#1c2026" opacity="1"/><polygon points="58,-5 80,-5 62,40" fill="#2e3238" opacity="1"/><rect x="76" y="30" width="12" height="60" fill="#2a2a2c" opacity="0.8"/><rect x="66" y="55" width="8" height="40" fill="#3a3634" opacity="0.7"/><ellipse cx="64" cy="17" rx="3" ry="4" fill="#a83232" opacity="1"/><ellipse cx="71.5" cy="48" rx="3" ry="7" fill="#d8d8d8" opacity="1"/><rect x="89" y="55" width="6" height="24" fill="#c8c4bc" opacity="1"/><rect x="94" y="-5" width="11" height="110" fill="#9a9a9a" opacity="1"/><rect x="80" y="60" width="8" height="30" fill="#2a2624" opacity="1"/><polygon points="38,105 49,55 60,55 78,105" fill="#98a4ae" opacity="1"/><polygon points="45,105 50,60 59,60 70,105" fill="#aab4bc" opacity="1"/><ellipse cx="54" cy="60" rx="8" ry="11" fill="#e6e2d8" opacity="1"/><rect x="51.5" y="65" width="5" height="31" fill="#c8b898" opacity="1"/><ellipse cx="52.5" cy="74" rx="2" ry="3" fill="#b04030" opacity="1"/><rect x="-5" y="80" width="43" height="25" fill="#181818" opacity="1"/><rect x="10" y="79" width="28" height="2" fill="#2a2a2a" opacity="1"/><rect x="12" y="82" width="2" height="20" fill="#6a6a6a" opacity="0.5"/><rect x="24" y="82" width="2" height="20" fill="#6a6a6a" opacity="0.5"/></g></svg>
<div style="left:1870px;top:1105px;width:103px;height:46px;background:#1473e6;border-radius:23px"></div>
<div class="t" style="left:1894.32px;top:1119.40px;font-size:19.14px;line-height:19px;font-weight:700;font-style:normal;color:#ffffff;transform:scaleX(0.8830)">Create</div>
<svg style="left:1835px;top:940px;" width="100" height="165" viewBox="0 0 100 165"><path d="M9.5 7.5 L80 142" stroke="#00ee00" stroke-width="4.2" stroke-linecap="round"/><path d="M89.2 159.8 L65.5 131.5 L79.5 124 Z" fill="#00ee00"/></svg>
</body></html>
